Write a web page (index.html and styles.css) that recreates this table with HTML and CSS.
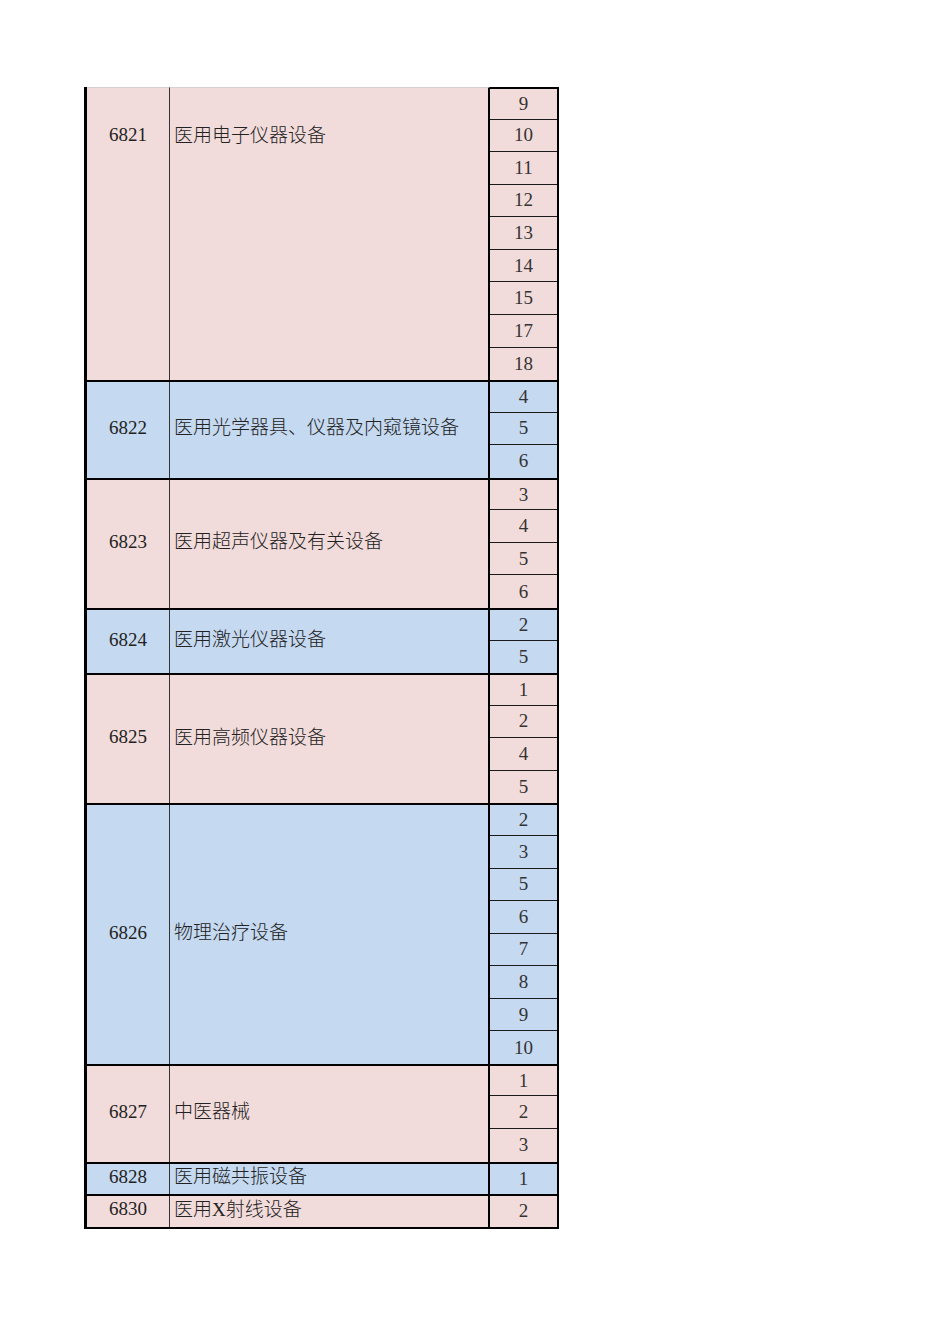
FILE: index.html
```html
<!DOCTYPE html>
<html lang="zh">
<head>
<meta charset="utf-8">
<link rel="stylesheet" href="styles.css">
</head>
<body>
<div class="sheet">
  <div class="group pink first">
    <div class="code top">6821</div>
    <div class="name top">医用电子仪器设备</div>
    <div class="nums"><div class="n">9</div><div class="n">10</div><div class="n">11</div><div class="n">12</div><div class="n">13</div><div class="n">14</div><div class="n">15</div><div class="n">17</div><div class="n">18</div></div>
  </div>
  <div class="group blue">
    <div class="code">6822</div>
    <div class="name">医用光学器具、仪器及内窥镜设备</div>
    <div class="nums"><div class="n">4</div><div class="n">5</div><div class="n">6</div></div>
  </div>
  <div class="group pink">
    <div class="code">6823</div>
    <div class="name">医用超声仪器及有关设备</div>
    <div class="nums"><div class="n">3</div><div class="n">4</div><div class="n">5</div><div class="n">6</div></div>
  </div>
  <div class="group blue">
    <div class="code">6824</div>
    <div class="name">医用激光仪器设备</div>
    <div class="nums"><div class="n">2</div><div class="n">5</div></div>
  </div>
  <div class="group pink">
    <div class="code">6825</div>
    <div class="name">医用高频仪器设备</div>
    <div class="nums"><div class="n">1</div><div class="n">2</div><div class="n">4</div><div class="n">5</div></div>
  </div>
  <div class="group blue">
    <div class="code">6826</div>
    <div class="name">物理治疗设备</div>
    <div class="nums"><div class="n">2</div><div class="n">3</div><div class="n">5</div><div class="n">6</div><div class="n">7</div><div class="n">8</div><div class="n">9</div><div class="n">10</div></div>
  </div>
  <div class="group pink">
    <div class="code">6827</div>
    <div class="name">中医器械</div>
    <div class="nums"><div class="n">1</div><div class="n">2</div><div class="n">3</div></div>
  </div>
  <div class="group blue">
    <div class="code">6828</div>
    <div class="name">医用磁共振设备</div>
    <div class="nums"><div class="n">1</div></div>
  </div>
  <div class="group pink">
    <div class="code">6830</div>
    <div class="name">医用X射线设备</div>
    <div class="nums"><div class="n">2</div></div>
  </div>
</div>
</body>
</html>
```

FILE: styles.css
```css
html, body {
  margin: 0;
  padding: 0;
  background: #ffffff;
}

body {
  font-family: "Liberation Serif", "Noto Sans CJK SC", serif;
  color: #222222;
}

.sheet {
  margin: 87px 0 0 84px;
  width: 475px;
  border-left: 3px solid #000000;
  border-bottom: 2px solid #000000;
  box-sizing: border-box;
}

.group {
  display: flex;
}

.group + .group {
  border-top: 2px solid #000000;
}

.pink { background: #f2dcdb; }
.blue { background: #c5d9f1; }

.code {
  width: 83px;
  box-sizing: border-box;
  border-right: 1px solid #333333;
  display: flex;
  align-items: center;
  justify-content: center;
  font-size: 19px;
  line-height: 20px;
  padding-bottom: 4px;
}

.name {
  width: 320px;
  box-sizing: border-box;
  border-right: 2px solid #000000;
  display: flex;
  align-items: center;
  padding-left: 4px;
  padding-bottom: 3px;
  font-size: 19px;
  line-height: 20px;
  font-weight: 300;
  white-space: nowrap;
}

.first .code,
.first .name {
  border-top: 1px solid #d9cfcf;
}

.code.top {
  align-items: flex-start;
  padding-top: 37px;
}

.name.top {
  align-items: flex-start;
  padding-top: 38px;
}

.nums {
  width: 69px;
  box-sizing: border-box;
  border-right: 2px solid #000000;
  display: flex;
  flex-direction: column;
}

.n {
  height: 32.57px;
  box-sizing: border-box;
  border-bottom: 1px solid #1a1a1a;
  display: flex;
  align-items: center;
  justify-content: center;
  font-size: 19px;
  line-height: 20px;
  color: #333333;
}

.n:last-child {
  border-bottom: none;
}

.first .n:first-child {
  border-top: 2px solid #000000;
}

.group + .group .n:first-child {
  height: 30.57px;
}
```
